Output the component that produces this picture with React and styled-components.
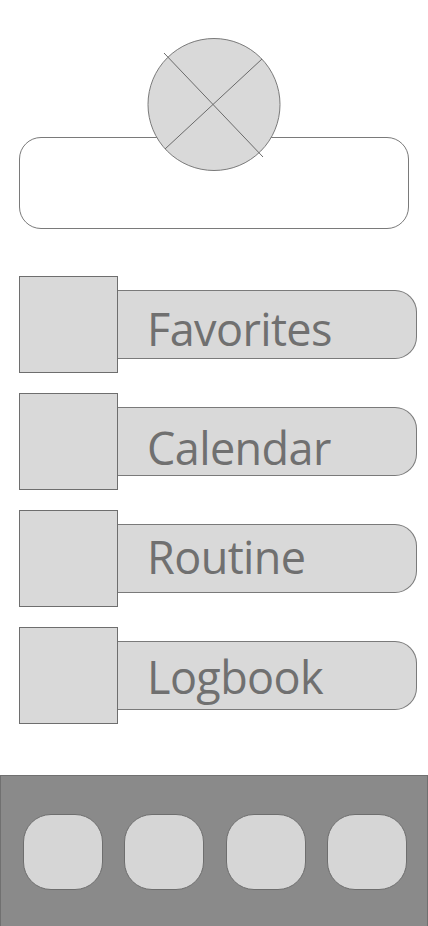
import styled, { createGlobalStyle } from "styled-components"

const GlobalStyle = createGlobalStyle`
  html, body {
    margin: 0;
    padding: 0;
    background: #ffffff;
    font-family: "Open Sans", "Noto Sans", sans-serif;
  }
`

const Page = styled.div`
  width: 428px;
  min-height: 926px;
  display: flex;
  flex-direction: column;
  box-sizing: border-box;
`

const Header = styled.div`
  display: flex;
  flex-direction: column;
  align-items: center;
  padding-top: 38px;
`

const Avatar = styled.svg`
  position: relative;
  z-index: 1;
  display: block;
  overflow: visible;
`

const ProfileBox = styled.div`
  margin: -34px 19px 0 19px;
  align-self: stretch;
  height: 92px;
  box-sizing: border-box;
  border: 1px solid #7a7a7a;
  border-radius: 22px;
  background: #ffffff;
`

const Menu = styled.div`
  display: flex;
  flex-direction: column;
  gap: 20px;
  padding: 47px 0 0 19px;
`

const Row = styled.div`
  display: flex;
  align-items: center;
`

const Thumb = styled.div`
  width: 99px;
  height: 97px;
  box-sizing: border-box;
  border: 1px solid #6e6e6e;
  background: #d9d9d9;
  position: relative;
  z-index: 1;
  flex-shrink: 0;
`

const Pill = styled.div`
  width: 300px;
  height: 69px;
  margin-left: -1px;
  box-sizing: border-box;
  border: 1px solid #7a7a7a;
  border-left: none;
  border-radius: 0 22px 22px 0;
  background: #d9d9d9;
  padding: ${(p) => p.$top}px 0 0 30px;
`

const Label = styled.span`
  display: block;
  font-size: 45px;
  line-height: 45px;
  letter-spacing: -0.6px;
  color: #707070;
`

const BottomBar = styled.div`
  margin-top: 51px;
  height: 151px;
  box-sizing: border-box;
  border: 1px solid #707070;
  border-bottom: none;
  background: #8a8a8a;
  display: flex;
  gap: 21.3px;
  padding: 38px 0 0 22px;
`

const NavButton = styled.div`
  width: 80px;
  height: 76px;
  box-sizing: border-box;
  border: 1px solid #6e6e6e;
  border-radius: 28px;
  background: #d6d6d6;
`

const items = [
  { label: "Favorites", top: 15 },
  { label: "Calendar", top: 17 },
  { label: "Routine", top: 9 },
  { label: "Logbook", top: 12 },
]

const App = () => {
  return (
    <Page>
      <GlobalStyle />
      <Header>
        <Avatar width="134" height="133" viewBox="0 0 134 133">
          <circle cx="67" cy="66.5" r="66" fill="#d9d9d9" stroke="#7a7a7a" strokeWidth="1" />
          <line x1="17" y1="15" x2="116" y2="119" stroke="#6a6a6a" strokeWidth="1" />
          <line x1="115" y1="21" x2="18" y2="111" stroke="#6a6a6a" strokeWidth="1" />
        </Avatar>
        <ProfileBox />
      </Header>
      <Menu>
        {items.map((item) => (
          <Row key={item.label}>
            <Thumb />
            <Pill $top={item.top}>
              <Label>{item.label}</Label>
            </Pill>
          </Row>
        ))}
      </Menu>
      <BottomBar>
        <NavButton />
        <NavButton />
        <NavButton />
        <NavButton />
      </BottomBar>
    </Page>
  )
}

export default App
